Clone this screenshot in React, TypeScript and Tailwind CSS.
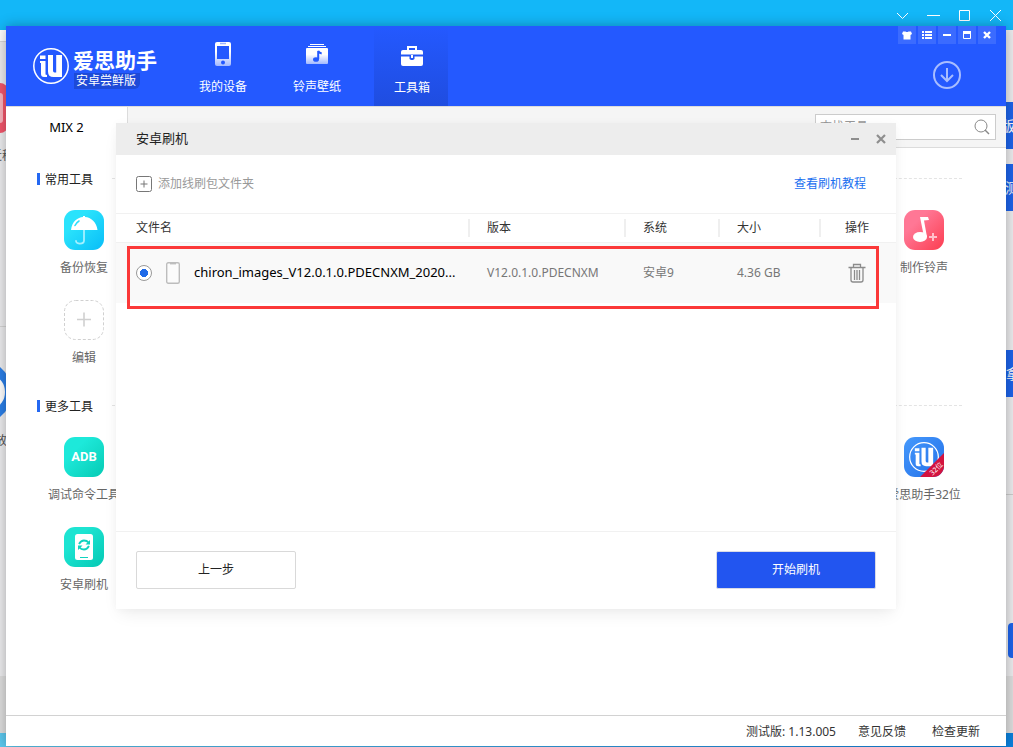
import type { ReactNode } from 'react';

const gridSpot = 'flex h-[90px] flex-col items-center';

function BrandMark({ className }: { className: string }) {
  return (
    <svg viewBox="0 0 36 36" className={className} fill="none" aria-hidden="true">
      <circle cx="18" cy="18" r="17.2" stroke="white" strokeWidth="1.500" />
      <path d="M7 7.500h5.500v3.500H7Z" fill="white" />
      <path d="M7 13h5.500v13.500l1.500.5V29h-3q-3 0-3-3V15H7Z" fill="white" />
      <path d="M15 7h5v15.500q0 2 1.500 2h1.700V7H29v22h-8.500Q15 29 15 23.500Z" fill="white" />
    </svg>
  );
}

function NavItem({ label, active, children }: { label: string; active?: boolean; children: ReactNode }) {
  return (
    <button
      className={
        active
          ? 'flex h-20 w-[74px] flex-col items-center gap-[9px] bg-linear-to-b from-[#2459ff] to-[#1f4de0] pt-4 pl-[2px] text-[12px] leading-5 text-white'
          : 'flex h-20 w-[74px] flex-col items-center gap-[9px] pt-[15px] text-[12px] leading-5 text-white'
      }
    >
      {children}
      <span>{label}</span>
    </button>
  );
}

function ChromeButton({ label, children }: { label: string; children: ReactNode }) {
  return (
    <button aria-label={label} className="flex size-[18px] items-center justify-center bg-[#3b6bff] text-white">
      {children}
    </button>
  );
}

function Tool({ label, place, children }: { label: string; place: string; children: ReactNode }) {
  return (
    <a href="#tool" className={`${gridSpot} ${place}`}>
      <span className="flex size-10 items-center justify-center">{children}</span>
      <span className="mt-2 text-[12px] leading-5 whitespace-nowrap text-[#666]">{label}</span>
    </a>
  );
}

function Section({ title, children }: { title: string; children: ReactNode }) {
  return (
    <section className="pb-[6px]">
      <div className="flex h-5 items-center pr-[44px] pl-[31px]">
        <span className="h-3 w-[3px] bg-[#2468f2]" />
        <h2 className="ml-[5px] pt-[2px] text-[12px] leading-5 text-[#222]">{title}</h2>
        <span className="mb-px ml-[19px] flex-1 border-t border-dashed border-[#e4e4e4]" />
      </div>
      <div className="mt-[21px] grid grid-cols-8 pr-[22px] pl-[18px]">{children}</div>
    </section>
  );
}

function BackWindow() {
  return (
    <div className="absolute inset-0 overflow-hidden bg-linear-to-r from-[#5cc8ee] to-[#0a80dc]" aria-hidden="true">
      <div className="flex h-[733px] flex-col bg-[#ececee]">
        <div className="flex h-[30px] items-center justify-end gap-[18px] bg-[#13b7f8] pr-[11px] text-white">
          <svg className="h-[13px] w-[13px]" viewBox="0 0 13 13" fill="none" stroke="currentColor"><path d="M1 4l5.500 5.500L12 4" /></svg>
          <svg className="h-[13px] w-[13px]" viewBox="0 0 13 13" fill="none" stroke="currentColor"><path d="M0 6.500h13" /></svg>
          <svg className="h-[13px] w-[13px]" viewBox="0 0 13 13" fill="none" stroke="currentColor"><path d="M1.500 1.500h10v10h-10z" /></svg>
          <svg className="h-[13px] w-[13px]" viewBox="0 0 13 13" fill="none" stroke="currentColor"><path d="M1 1l11 11M12 1L1 12" /></svg>
        </div>
        <div className="flex flex-1 justify-between">
          <div className="w-3 border-r border-[#ddd]">
            <div className="h-3 border-b border-[#d8d8d8] bg-white" />
            <div className="mt-[41px] h-[50px] w-2 rounded-tr-lg rounded-br-lg bg-[#f2556b] py-[10px]">
              <div className="h-[30px] w-[3px] rounded-r-sm bg-[#f9b3bd]" />
            </div>
            <div className="mt-[13px] flex h-5 justify-end text-[12px] leading-5 text-[#555]"><span className="w-[21px] shrink-0 whitespace-nowrap">迁移</span></div>
            <div className="mt-[160px] border-t border-[#d4d4d4]" />
            <div className="mt-10 flex h-[50px] w-3 items-center justify-end">
              <svg viewBox="0 0 12 50" className="h-[50px] w-3"><path d="M-20 0H0Q12 10 12 25T0 50H-20Z" fill="#2b7fe8" /><ellipse cx="-6" cy="25" rx="11" ry="15" fill="white" /></svg>
            </div>
            <div className="mt-[14px] flex h-5 justify-end text-[12px] leading-5 text-[#555]"><span className="w-4 shrink-0">放</span></div>
          </div>
          <div className="w-3 text-[14px] text-white">
            <div className="mt-[72px] h-[47px] w-6 overflow-hidden bg-[#1d63ea] leading-[47px]">版</div>
            <div className="mt-[15px] h-[47px] w-6 overflow-hidden bg-[#1d63ea] pl-1 leading-[47px]">测</div>
            <div className="mt-[139px] h-[47px] w-6 overflow-hidden bg-[#1d63ea] pl-[5px] leading-[47px]">拿</div>
            <div className="mt-[97px] border-t border-[#ccc]" />
            <div className="mt-[128px] ml-[7px] h-[35px] w-6 rounded-sm bg-[#1d63ea]" />
          </div>
        </div>
        <div className="h-[57px] bg-[#dedede]" />
      </div>
    </div>
  );
}

function Header() {
  return (
    <header className="flex h-20 justify-between bg-[#2459ff]">
      <div className="flex">
        <div className="flex w-[180px] pt-[22px] pl-[27px]">
          <BrandMark className="size-9" />
          <div className="ml-1 text-white">
            <h1 className="text-[21px] leading-6 font-bold whitespace-nowrap">爱思助手</h1>
            <span className="mt-px ml-px block w-[66px] rounded-br-md bg-[#1d4ad8] pl-[2px] text-[12px] leading-4 whitespace-nowrap">安卓尝鲜版</span>
          </div>
        </div>
        <nav className="flex gap-5">
          <NavItem label="我的设备">
            <svg viewBox="0 0 26 27" className="h-[27px] w-[26px]" aria-hidden="true">
              <defs><linearGradient id="fade" x1="0" y1="0" x2="0" y2="1"><stop offset="0.4" stopColor="#fff" /><stop offset="1" stopColor="#a3b9ff" /></linearGradient></defs>
              <rect x="5" y="1" width="16" height="24" rx="2" fill="url(#fade)" />
              <path d="M10 2.500h6" stroke="#9db4ff" strokeWidth="1.500" />
              <path d="M7 5h12v13H7z" fill="#2459ff" /><circle cx="13" cy="21.500" r="2" fill="#2459ff" />
            </svg>
          </NavItem>
          <NavItem label="铃声壁纸">
            <svg viewBox="0 0 26 27" className="h-[27px] w-[26px]" aria-hidden="true">
              <path d="M6 3.500h14M4 5.500h18" stroke="white" />
              <rect x="2" y="7" width="22" height="16" rx="1" fill="url(#fade)" />
              <ellipse cx="12" cy="18.500" rx="3" ry="2.300" fill="#2459ff" /><path d="M14.200 18V10q1 2 3.500 2.500" fill="none" stroke="#2459ff" strokeWidth="2" />
            </svg>
          </NavItem>
          <NavItem label="工具箱" active>
            <svg viewBox="0 0 26 27" className="h-[27px] w-[26px]" aria-hidden="true">
              <path d="M9 8V5h8v3" fill="none" stroke="white" strokeWidth="2" />
              <rect x="2" y="8" width="22" height="16" rx="2" fill="white" />
              <path d="M2 13.500h22" stroke="#2357f5" strokeWidth="2" />
              <path d="M10.500 13h5v4l-1.500 1h-2l-1.500-1z" fill="#2357f5" /><path d="M12 13h2v3h-2z" fill="white" />
            </svg>
          </NavItem>
        </nav>
      </div>
      <div className="flex w-[120px] flex-col items-end pr-[10px]">
        <div className="flex gap-[2px]">
          <ChromeButton label="皮肤"><svg viewBox="0 0 10 10" className="size-[10px]"><path d="M1 1.500h2.500q1.500 1 3 0H9l1 2.500-1.500 1V9.500h-7V5L0 4z" fill="currentColor" /></svg></ChromeButton>
          <ChromeButton label="菜单"><svg viewBox="0 0 10 10" className="size-[10px]"><path d="M0 2h2M3 2h7M0 5h2M3 5h7M0 8h2M3 8h7" stroke="currentColor" strokeWidth="2" /></svg></ChromeButton>
          <ChromeButton label="最小化"><svg viewBox="0 0 10 10" className="size-[10px]"><path d="M1 5h8" stroke="currentColor" strokeWidth="2" /></svg></ChromeButton>
          <ChromeButton label="最大化"><svg viewBox="0 0 10 10" className="size-[10px]"><path d="M1.500 1.500h7v7h-7z" fill="none" stroke="currentColor" /><path d="M1 2.500h8" stroke="currentColor" strokeWidth="3" /></svg></ChromeButton>
          <ChromeButton label="关闭"><svg viewBox="0 0 10 10" className="size-[10px]"><path d="M2 2l6 6M8 2L2 8" stroke="currentColor" strokeWidth="2.400" /></svg></ChromeButton>
        </div>
        <button aria-label="下载" className="mt-[17px] mr-[35px]">
          <svg viewBox="0 0 28 28" className="size-7" fill="none" stroke="#a8bdff" strokeWidth="2"><circle cx="14" cy="14" r="13" /><path d="M14 7v13M8 14l6 6 6-6" /></svg>
        </button>
      </div>
    </header>
  );
}

const separated = 'h-[18px] border-l-2 border-[#efefef] pl-[17px] leading-[18px]';

function FlashDialog() {
  return (
    <div role="dialog" aria-label="安卓刷机" className="absolute inset-x-[110px] top-[97px] bg-white shadow-[0_8px_16px_-4px_rgba(0,0,0,0.08),0_0_8px_rgba(0,0,0,0.03)]">
      <div className="flex h-8 items-center justify-between bg-[#ededed] pr-[9px] pl-5">
        <h2 className="pb-[2px] text-[13px] leading-5 text-[#222]">安卓刷机</h2>
        <div className="flex gap-[14px] text-[#8e8e8e]">
          <button aria-label="最小化"><svg viewBox="0 0 12 12" className="size-3"><path d="M2 6h8" stroke="currentColor" strokeWidth="2" /></svg></button>
          <button aria-label="关闭"><svg viewBox="0 0 12 12" className="size-3"><path d="M2 2l8 8M10 2l-8 8" stroke="currentColor" strokeWidth="2.200" /></svg></button>
        </div>
      </div>
      <div className="flex h-[58px] items-center justify-between pr-[30px] pl-5 text-[12px] leading-5">
        <button className="flex items-center gap-[6px] text-[#999]">
          <svg viewBox="0 0 16 16" className="size-4" fill="none" stroke="#777"><rect x="0.500" y="0.500" width="15" height="15" rx="2" /><path d="M8 4.500v7M4.500 8h7" /></svg>
          添加线刷包文件夹
        </button>
        <a href="#guide" className="text-[#1a6ff0]">查看刷机教程</a>
      </div>
      <div className="min-h-[318px]">
        <table className="w-full table-fixed border-collapse text-left text-[12px]">
          <colgroup><col /><col className="w-[156px]" /><col className="w-[94px]" /><col className="w-[101px]" /><col className="w-[77px]" /></colgroup>
          <thead>
            <tr className="h-[29px] border-y border-[#f1f1f1] text-[#333]">
              <th className="p-0 pl-5 font-normal">文件名</th>
              <th className="p-0 font-normal"><div className={separated}>版本</div></th>
              <th className="p-0 font-normal"><div className={separated}>系统</div></th>
              <th className="p-0 font-normal"><div className={separated}>大小</div></th>
              <th className="p-0 font-normal"><div className="h-[18px] border-l-2 border-[#efefef] pl-6 leading-[18px]">操作</div></th>
            </tr>
          </thead>
          <tbody>
            <tr className="h-[60px] bg-[#f9f9f9] text-[#777]">
              <td className="p-0">
                <label className="flex items-center pl-5 whitespace-nowrap">
                  <input type="radio" name="package" defaultChecked className="size-4 appearance-none rounded-full border border-[#999] bg-white bg-radial from-[#1f6ae8] from-45% to-white to-50% bg-size-[12px_12px] bg-center bg-no-repeat" />
                  <svg viewBox="0 0 14 22" className="ml-[14px] h-[22px] w-[14px]" fill="none" stroke="#bdbdbd" strokeWidth="1.400"><rect x="0.700" y="0.700" width="12.600" height="20.600" rx="1.500" fill="#fbfbfb" /><path d="M4 1.700h6" /></svg>
                  <span className="ml-[14px] text-[13px] text-black">chiron_images_V12.0.1.0.PDECNXM_2020...</span>
                </label>
              </td>
              <td className="p-0 pl-[19px]">V12.0.1.0.PDECNXM</td>
              <td className="p-0 pl-[19px]">安卓9</td>
              <td className="p-0 pl-[19px]">4.36 GB</td>
              <td className="p-0 pl-[29px]">
                <button aria-label="删除" className="block">
                  <svg viewBox="0 0 18 20" className="h-5 w-[18px]" fill="none" stroke="#8c8c8c" strokeWidth="1.300"><path d="M0.500 4.500h17M5.500 4V1.500h7V4M3 4.500v12.500q0 2 2 2h8q2 0 2-2V4.500M6.500 7v10M9 7v10M11.500 7v10" /></svg>
                </button>
              </td>
            </tr>
          </tbody>
        </table>
      </div>
      <div className="flex h-[78px] items-center justify-between border-t border-[#f1f1f1] px-5 pb-[2px] text-[12px]">
        <button className="h-[38px] w-40 rounded-xs border border-[#d9d9d9] bg-white text-[#222]">上一步</button>
        <button className="h-[38px] w-40 rounded-xs border border-[#d9dbe6] bg-[#2255f0] text-white">开始刷机</button>
      </div>
      <div className="pointer-events-none absolute top-[123px] right-[17px] left-[11px] h-[63px] border-3 border-[#fb3838]" />
    </div>
  );
}

export default function App() {
  return (
    <div className="relative flex min-h-screen flex-col overflow-hidden pt-[26px] pr-[7px] pb-px pl-[6px] font-['Noto_Sans','Noto_Sans_CJK_SC',sans-serif]">
      <BackWindow />
      <div className="relative flex flex-1 flex-col bg-white shadow-[0_0_12px_rgba(0,0,0,0.3)]">
        <Header />
        <div className="flex h-[42px] border-t border-[#dcdcdc]">
          <div className="w-[122px] border-r border-[#dcdcdc] bg-white text-center text-[13px] leading-10 text-black">MIX 2</div>
          <div className="flex flex-1 items-center justify-end border-b border-[#dcdcdc] bg-[#f5f5f5] pr-[10px]">
            <div className="flex h-[26px] w-[181px] items-center border border-[#ccc] bg-white pr-[5px] pl-1">
              <input aria-label="查找工具" placeholder="查找工具" className="min-w-0 flex-1 text-[12px] leading-5 outline-none placeholder:text-[#999]" />
              <svg viewBox="0 0 16 16" className="size-4" fill="none" stroke="#888"><circle cx="7" cy="7" r="6" /><path d="M11 11l4 4" strokeWidth="1.400" /></svg>
            </div>
          </div>
        </div>
        <main className="flex-1 pt-[21px]">
          <Section title="常用工具">
            <Tool label="备份恢复" place="col-start-1">
              <svg viewBox="0 0 40 40" className="size-10">
                <defs><linearGradient id="cyan" x1="0" y1="0" x2="1" y2="1"><stop offset="0.3" stopColor="#2ae3fc" /><stop offset="1" stopColor="#08bdf8" /></linearGradient></defs>
                <rect width="40" height="40" rx="11" fill="url(#cyan)" />
                <path d="M20 19v11.500c0 4-8 4-8 .5" fill="none" stroke="#a4f0ff" strokeWidth="1.800" strokeLinecap="round" />
                <path d="M7 20C8 11 14 7.500 19 7V6h2v1c6 .5 11.500 5 12.500 13Z" fill="white" />
                <path d="M11 15.500q1.500-3 4-4.500" fill="none" stroke="#2adffc" strokeWidth="1.600" strokeLinecap="round" />
              </svg>
            </Tool>
            <Tool label="制作铃声" place="col-start-8">
              <svg viewBox="0 0 40 40" className="size-10">
                <defs><linearGradient id="rose" x1="0" y1="0" x2="1" y2="1"><stop offset="0.3" stopColor="#ff7795" /><stop offset="1" stopColor="#fc3d50" /></linearGradient></defs>
                <rect width="40" height="40" rx="11" fill="url(#rose)" />
                <ellipse cx="16" cy="27" rx="7" ry="5" fill="white" />
                <path d="M16 7h8l1 3-5 .5L23 27h-3Z" fill="white" />
                <path d="M29 23v8M25 27h8" stroke="#ffc0cb" strokeWidth="2" />
              </svg>
            </Tool>
            <Tool label="编辑" place="col-start-1">
              <svg viewBox="0 0 40 40" className="size-10" fill="none" stroke="#d0d0d0"><rect x="0.500" y="0.500" width="39" height="39" rx="11" strokeDasharray="3 2" /><path d="M20 12.500v14M13 19.500h14" strokeWidth="1.600" /></svg>
            </Tool>
          </Section>
          <Section title="更多工具">
            <Tool label="调试命令工具" place="col-start-1">
              <span className="flex size-10 items-center justify-center rounded-[11px] bg-linear-to-br from-[#1de9da] from-30% to-[#04cbb4] font-['Roboto',sans-serif] text-[13px] font-bold text-white">ADB</span>
            </Tool>
            <Tool label="爱思助手32位" place="col-start-8">
              <span className="relative block size-10 overflow-hidden rounded-[11px] bg-linear-to-br from-[#4699fc] to-[#226fe8]">
                <BrandMark className="mt-[5px] ml-[5px] size-[30px]" />
                <span className="absolute -right-[15px] -bottom-1 w-10 -rotate-45 bg-[#d3133f] pb-2 text-center text-[7px] leading-[11px] text-white">32位</span>
              </span>
            </Tool>
            <Tool label="安卓刷机" place="col-start-1">
              <svg viewBox="0 0 40 40" className="size-10">
                <defs><linearGradient id="teal" x1="0" y1="0" x2="1" y2="1"><stop offset="0.3" stopColor="#1de4d2" /><stop offset="1" stopColor="#04c9b4" /></linearGradient></defs>
                <rect width="40" height="40" rx="11" fill="url(#teal)" />
                <rect x="11" y="7" width="18" height="26" rx="2.500" fill="white" />
                <path d="M16 30.500h8" stroke="#0fd3c0" />
                <path d="M15 17q2-3.500 5-3.500t4.500 2M25 19q-2 3.500-5 3.500t-4.500-2" fill="none" stroke="#0fd3c0" strokeWidth="1.800" />
                <path d="M26 13v4.500h-4.500ZM14 23v-4.500h4.500Z" fill="#0fd3c0" />
              </svg>
            </Tool>
          </Section>
        </main>
        <footer className="flex h-[31px] items-center justify-end gap-[22px] border-t border-[#d2d2d2] pt-[2px] pr-[26px] text-[12px] leading-5 text-[#333]">
          <span>测试版: 1.13.005</span>
          <a href="#feedback">意见反馈</a>
          <a href="#update" className="ml-1">检查更新</a>
        </footer>
        <FlashDialog />
      </div>
    </div>
  );
}
